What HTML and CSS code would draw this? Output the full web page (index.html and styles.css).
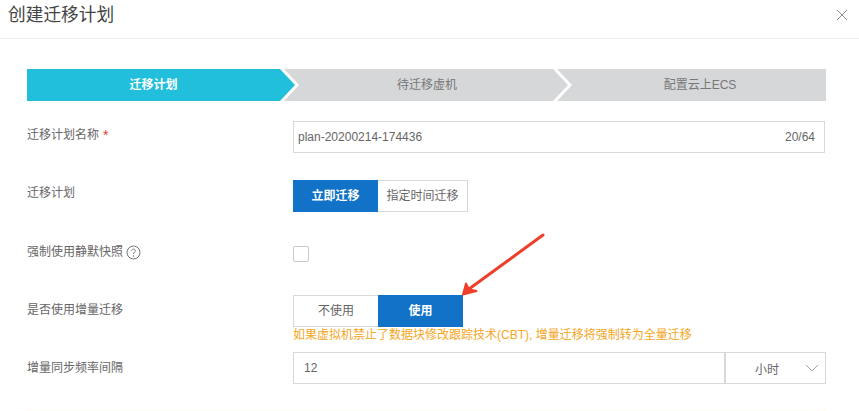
FILE: index.html
```html
<!DOCTYPE html>
<html lang="zh">
<head>
<meta charset="utf-8">
<title>创建迁移计划</title>
<link rel="stylesheet" href="styles.css">
</head>
<body>
<div class="dialog">
  <header class="head">
    <h1 class="title">创建迁移计划</h1>
    <svg class="close" width="12" height="12" viewBox="0 0 12 12"><path d="M1 1l10 10M11 1L1 11" stroke="#8a8a8a" stroke-width="1" fill="none"/></svg>
  </header>
  <div class="body">
    <div class="steps">
      <div class="step step-1 active">迁移计划</div>
      <div class="step step-2">待迁移虚机</div>
      <div class="step step-3">配置云上ECS</div>
    </div>
    <div class="row row-name">
      <label class="label">迁移计划名称 <span class="req">*</span></label>
      <div class="input wide"><span>plan-20200214-174436</span><span>20/64</span></div>
    </div>
    <div class="row row-plan">
      <label class="label">迁移计划</label>
      <div class="seg">
        <span class="seg-btn on b1">立即迁移</span><span class="seg-btn b2">指定时间迁移</span>
      </div>
    </div>
    <div class="row row-snap">
      <label class="label">强制使用静默快照
        <svg class="help" width="15" height="15" viewBox="0 0 15 15"><circle cx="7.5" cy="7.5" r="6.5" fill="none" stroke="#777" stroke-width="1"/><path d="M5.6 5.900c0-1.100.9-1.800 1.900-1.800s1.900.7 1.900 1.700c0 1.500-1.900 1.500-1.900 3.200" fill="none" stroke="#777" stroke-width="1"/><circle cx="7.5" cy="11" r=".7" fill="#777"/></svg>
      </label>
      <span class="check"></span>
    </div>
    <div class="row row-inc">
      <label class="label">是否使用增量迁移</label>
      <div class="inc-col">
        <div class="seg">
          <span class="seg-btn b3">不使用</span><span class="seg-btn on b4">使用</span>
        </div>
        <p class="warn">如果虚拟机禁止了数据块修改跟踪技术(CBT), 增量迁移将强制转为全量迁移</p>
      </div>
    </div>
    <div class="row row-freq">
      <label class="label">增量同步频率间隔</label>
      <div class="combo">
        <div class="input num">12</div>
        <div class="select"><span>小时</span><svg width="14" height="8" viewBox="0 0 14 8"><path d="M1 1l6 6 6-6" fill="none" stroke="#a0a0a0" stroke-width="1"/></svg></div>
      </div>
    </div>
    <div class="notice"></div>
  </div>
  <svg class="annot" width="90" height="72" viewBox="0 0 90 72"><path d="M84 4L10 58" stroke="#ee3f2b" stroke-width="3" stroke-linecap="round" fill="none"/><path d="M4 63.500L7 52.500l3 6 7.500 1.500z" fill="#ee3f2b" stroke="#ee3f2b" stroke-width="2" stroke-linejoin="round"/></svg>
</div>
</body>
</html>
```

FILE: styles.css
```css
* { box-sizing: border-box; }
html, body { margin: 0; padding: 0; background: #fff; }
body { width: 859px; height: 411px; overflow: hidden; font-family: "Liberation Sans", "Noto Sans CJK SC", sans-serif; font-size: 12px; color: #666; }
.dialog { position: relative; width: 859px; height: 411px; overflow: hidden; }
.head { height: 39px; border-bottom: 1px solid #eeeeee; display: flex; justify-content: space-between; align-items: center; padding: 0 11px 9px 8px; }
.title { margin: 0; font-size: 17.700px; line-height: 24px; font-weight: 400; color: #444; }
.close { margin-top: 0; }
.body { padding: 30px 33px 0 27px; }
.steps { display: flex; height: 32px; }
.step { height: 32px; line-height: 32px; text-align: center; background: #d6d7d9; color: #777; }
.step-1 { width: 268px; background: #21bfdb; color: #fff; font-weight: 700; padding-right: 15px; clip-path: polygon(0 0, 253px 0, 268px 50%, 253px 100%, 0 100%); }
.step-2 { width: 284px; margin-left: -11px; padding-left: 2px; clip-path: polygon(0 0, 269px 0, 284px 50%, 269px 100%, 0 100%, 15px 50%); }
.step-3 { width: 269px; margin-left: -11px; padding-left: 17px; clip-path: polygon(0 0, 100% 0, 100% 100%, 0 100%, 15px 50%); }
.row { display: flex; align-items: flex-start; }
.label { width: 266px; flex: none; line-height: 18px; color: #666; display: flex; align-items: center; gap: 4px; }
.req { color: #e0412f; font-size: 14px; }
.row-name { margin-top: 20px; }
.row-name .label { padding-top: 5px; }
.input { height: 32px; border: 1px solid #d7d8d9; line-height: 30px; padding: 0 4px; color: #666; }
.wide { width: 532px; display: flex; justify-content: space-between; padding-right: 9px; }
.row-plan { margin-top: 27px; }
.row-plan .label { padding-top: 4px; }
.seg { display: flex; height: 32px; }
.seg-btn { height: 32px; line-height: 30px; text-align: center; border: 1px solid #d7d8d9; color: #666; background: #fff; }
.seg-btn.on { background: #1172c8; border-color: #1172c8; color: #fff; font-weight: 700; }
.b1 { width: 85px; }
.b2 { width: 90px; border-left: 0; }
.b3 { width: 85px; border-right: 0; }
.b4 { width: 85px; }
.row-snap { margin-top: 31px; }
.row-snap .label { padding-top: 0; }
.help { margin-left: -1px; }
.check { width: 16px; height: 16px; margin-top: 3px; border: 1px solid #c9c9c9; border-radius: 2px; background: #fff; }
.row-inc { margin-top: 33px; }
.row-inc .label { padding-top: 6px; }
.inc-col { display: flex; flex-direction: column; }
.warn { margin: 0; line-height: 16px; color: #f5a623; white-space: nowrap; }
.row-freq { margin-top: 9px; }
.row-freq .label { padding-top: 7px; }
.combo { display: flex; width: 533px; }
.num { width: 432px; padding-left: 10px; }
.select { width: 101px; height: 32px; margin-left: 0; border: 1px solid #d7d8d9; display: flex; align-items: center; justify-content: space-between; padding: 0 6px 0 29px; }
.notice { margin-top: 26px; margin-left: -2px; height: 20px; width: 801px; background: #fffdeb; }
.annot { position: absolute; left: 459px; top: 231px; }
```
